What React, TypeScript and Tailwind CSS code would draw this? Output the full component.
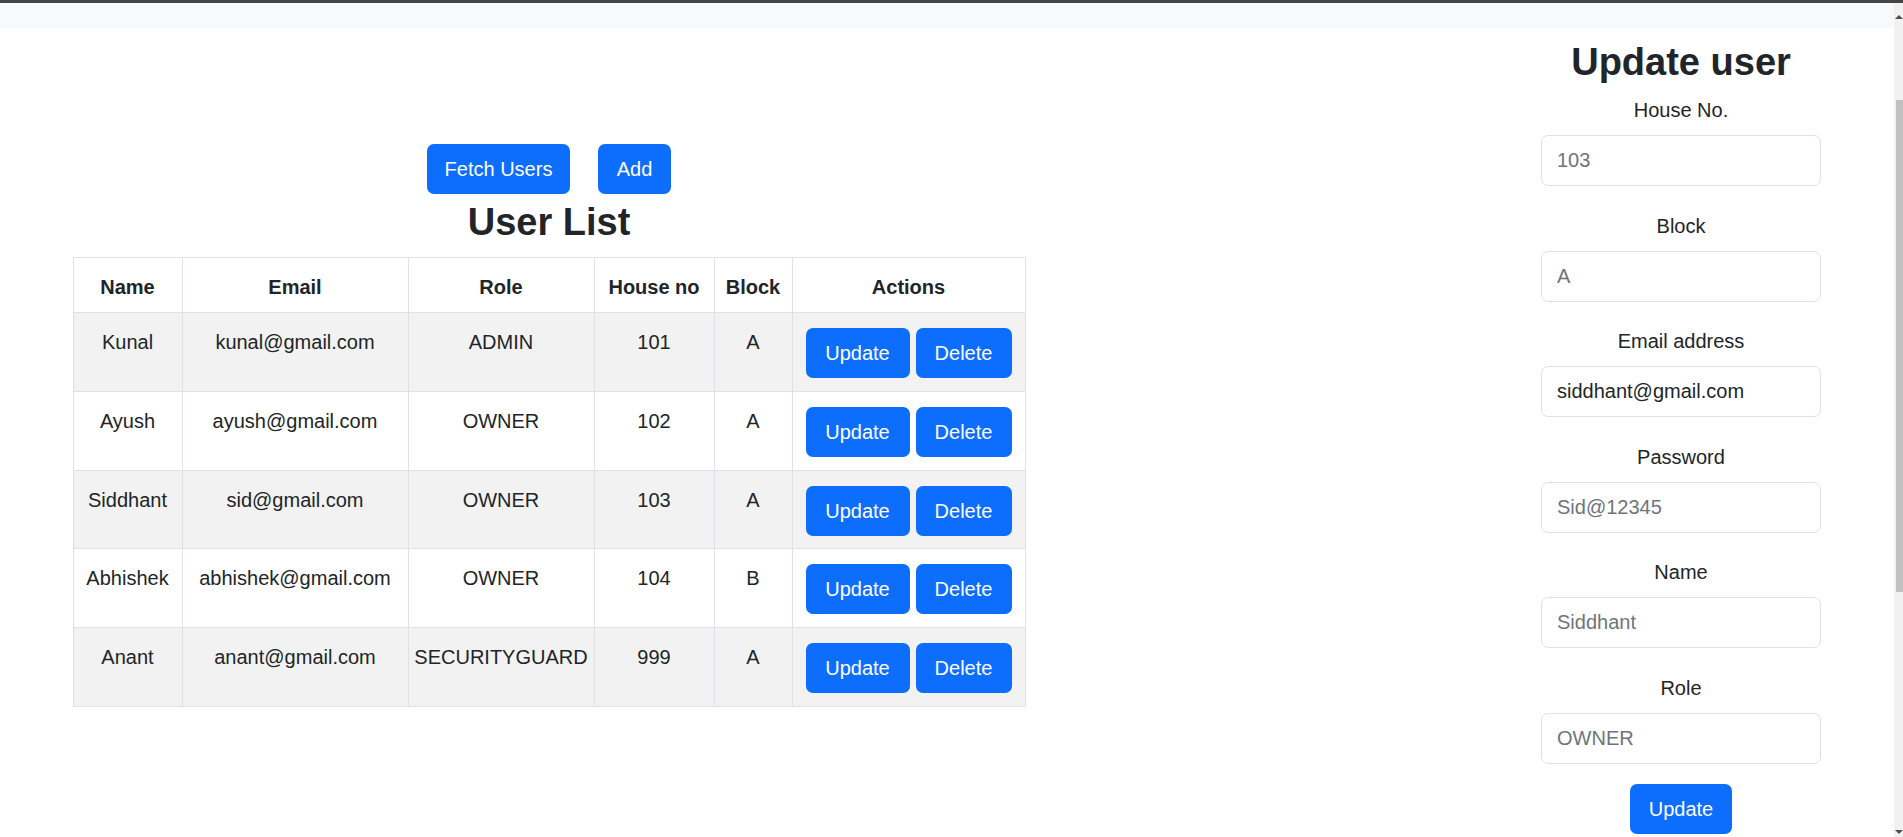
const users = [
  { name: "Kunal", email: "kunal@gmail.com", role: "ADMIN", houseNo: 101, block: "A" },
  { name: "Ayush", email: "ayush@gmail.com", role: "OWNER", houseNo: 102, block: "A" },
  { name: "Siddhant", email: "sid@gmail.com", role: "OWNER", houseNo: 103, block: "A" },
  { name: "Abhishek", email: "abhishek@gmail.com", role: "OWNER", houseNo: 104, block: "B" },
  { name: "Anant", email: "anant@gmail.com", role: "SECURITYGUARD", houseNo: 999, block: "A" },
];

const fields = [
  { label: "House No.", placeholder: "103" },
  { label: "Block", placeholder: "A" },
  { label: "Email address", value: "siddhant@gmail.com" },
  { label: "Password", placeholder: "Sid@12345" },
  { label: "Name", placeholder: "Siddhant" },
  { label: "Role", placeholder: "OWNER" },
];

const headers = ["Name", "Email", "Role", "House no", "Block", "Actions"];

const btn =
  "h-[50px] rounded-[7px] bg-[#0d6efd] text-[20px] leading-[30px] text-white text-center";

const App = () => {
  return (
    <div
      className="h-screen overflow-hidden flex flex-col bg-white text-[#212529]"
      style={{ fontFamily: '"Liberation Sans", Arial, sans-serif' }}
    >
      <div className="h-[3px] bg-[#454545]" />

      <div className="flex flex-1 min-h-0">
        <div className="flex-1 flex flex-col">
          {/* navbar strip */}
          <div className="h-[25px] bg-[#f8f9fa]" />

          <div className="flex justify-between">
            {/* User list */}
            <section className="w-[952px] ml-[73px] pt-[116px] flex flex-col items-center">
              <div className="flex gap-[28px]">
                <button className={`${btn} w-[143px]`}>Fetch Users</button>
                <button className={`${btn} w-[73px]`}>Add</button>
              </div>
              <h2 className="mt-[5px] mb-[12px] text-[38px] leading-[46px] font-bold">User List</h2>

              <table className="w-[952px] table-fixed border-collapse text-[20px] leading-[30px]">
                <colgroup>
                  <col className="w-[109px]" />
                  <col className="w-[226px]" />
                  <col className="w-[186px]" />
                  <col className="w-[120px]" />
                  <col className="w-[78px]" />
                  <col className="w-[233px]" />
                </colgroup>
                <thead>
                  <tr className="h-[55px]">
                    {headers.map((h) => (
                      <th
                        key={h}
                        className="border border-[#dee2e6] px-0.5 pt-[14px] align-top font-bold text-center whitespace-nowrap"
                      >
                        {h}
                      </th>
                    ))}
                  </tr>
                </thead>
                <tbody>
                  {users.map((u, i) => (
                    <tr key={u.name} className={`h-[78.8px] ${i % 2 === 0 ? "bg-[#f2f2f2]" : "bg-white"}`}>
                      {[u.name, u.email, u.role, u.houseNo, u.block].map((v, j) => (
                        <td
                          key={j}
                          className="border border-[#dee2e6] px-0.5 pt-[14px] align-top text-center whitespace-nowrap"
                        >
                          {v}
                        </td>
                      ))}
                      <td className="border border-[#dee2e6] pt-[15px] align-top">
                        <div className="flex justify-center gap-[6px]">
                          <button className={`${btn} w-[104px]`}>Update</button>
                          <button className={`${btn} w-[96px]`}>Delete</button>
                        </div>
                      </td>
                    </tr>
                  ))}
                </tbody>
              </table>
            </section>

            {/* Update form */}
            <aside className="w-[280px] mr-[73px] pt-[11px] flex flex-col">
              <h2 className="mb-[10px] text-center text-[38px] leading-[46px] font-bold">Update user</h2>
              {fields.map((f, i) => (
                <div key={f.label} className={i === fields.length - 1 ? "mb-[20.5px]" : "mb-[24.5px]"}>
                  <label className="block mb-[10px] text-center text-[20px] leading-[30px]">{f.label}</label>
                  <input
                    readOnly
                    value={f.value ?? ""}
                    placeholder={f.placeholder}
                    className="block h-[51px] w-full rounded-[7px] border border-[#dee2e6] bg-white px-[15px] text-[20px] text-[#212529] placeholder:text-[#6c757d] outline-none"
                  />
                </div>
              ))}
              <button className={`${btn} w-[102px] mx-auto`}>Update</button>
            </aside>
          </div>
        </div>

        {/* page scrollbar */}
        <div className="w-[9px] bg-[#f1f1f1] flex flex-col">
          <div className="h-[97px] flex justify-center pt-[12px]">
            <div className="h-0 w-0 border-x-[4px] border-b-[4px] border-x-transparent border-b-[#505050]" />
          </div>
          <div className="h-[492px] ml-[2px] bg-[#c1c1c1]" />
          <div className="flex-1 flex items-end justify-center pb-[3px]">
            <div className="h-0 w-0 border-x-[4px] border-t-[4px] border-x-transparent border-t-[#505050]" />
          </div>
        </div>
      </div>
    </div>
  );
};

export default App;
